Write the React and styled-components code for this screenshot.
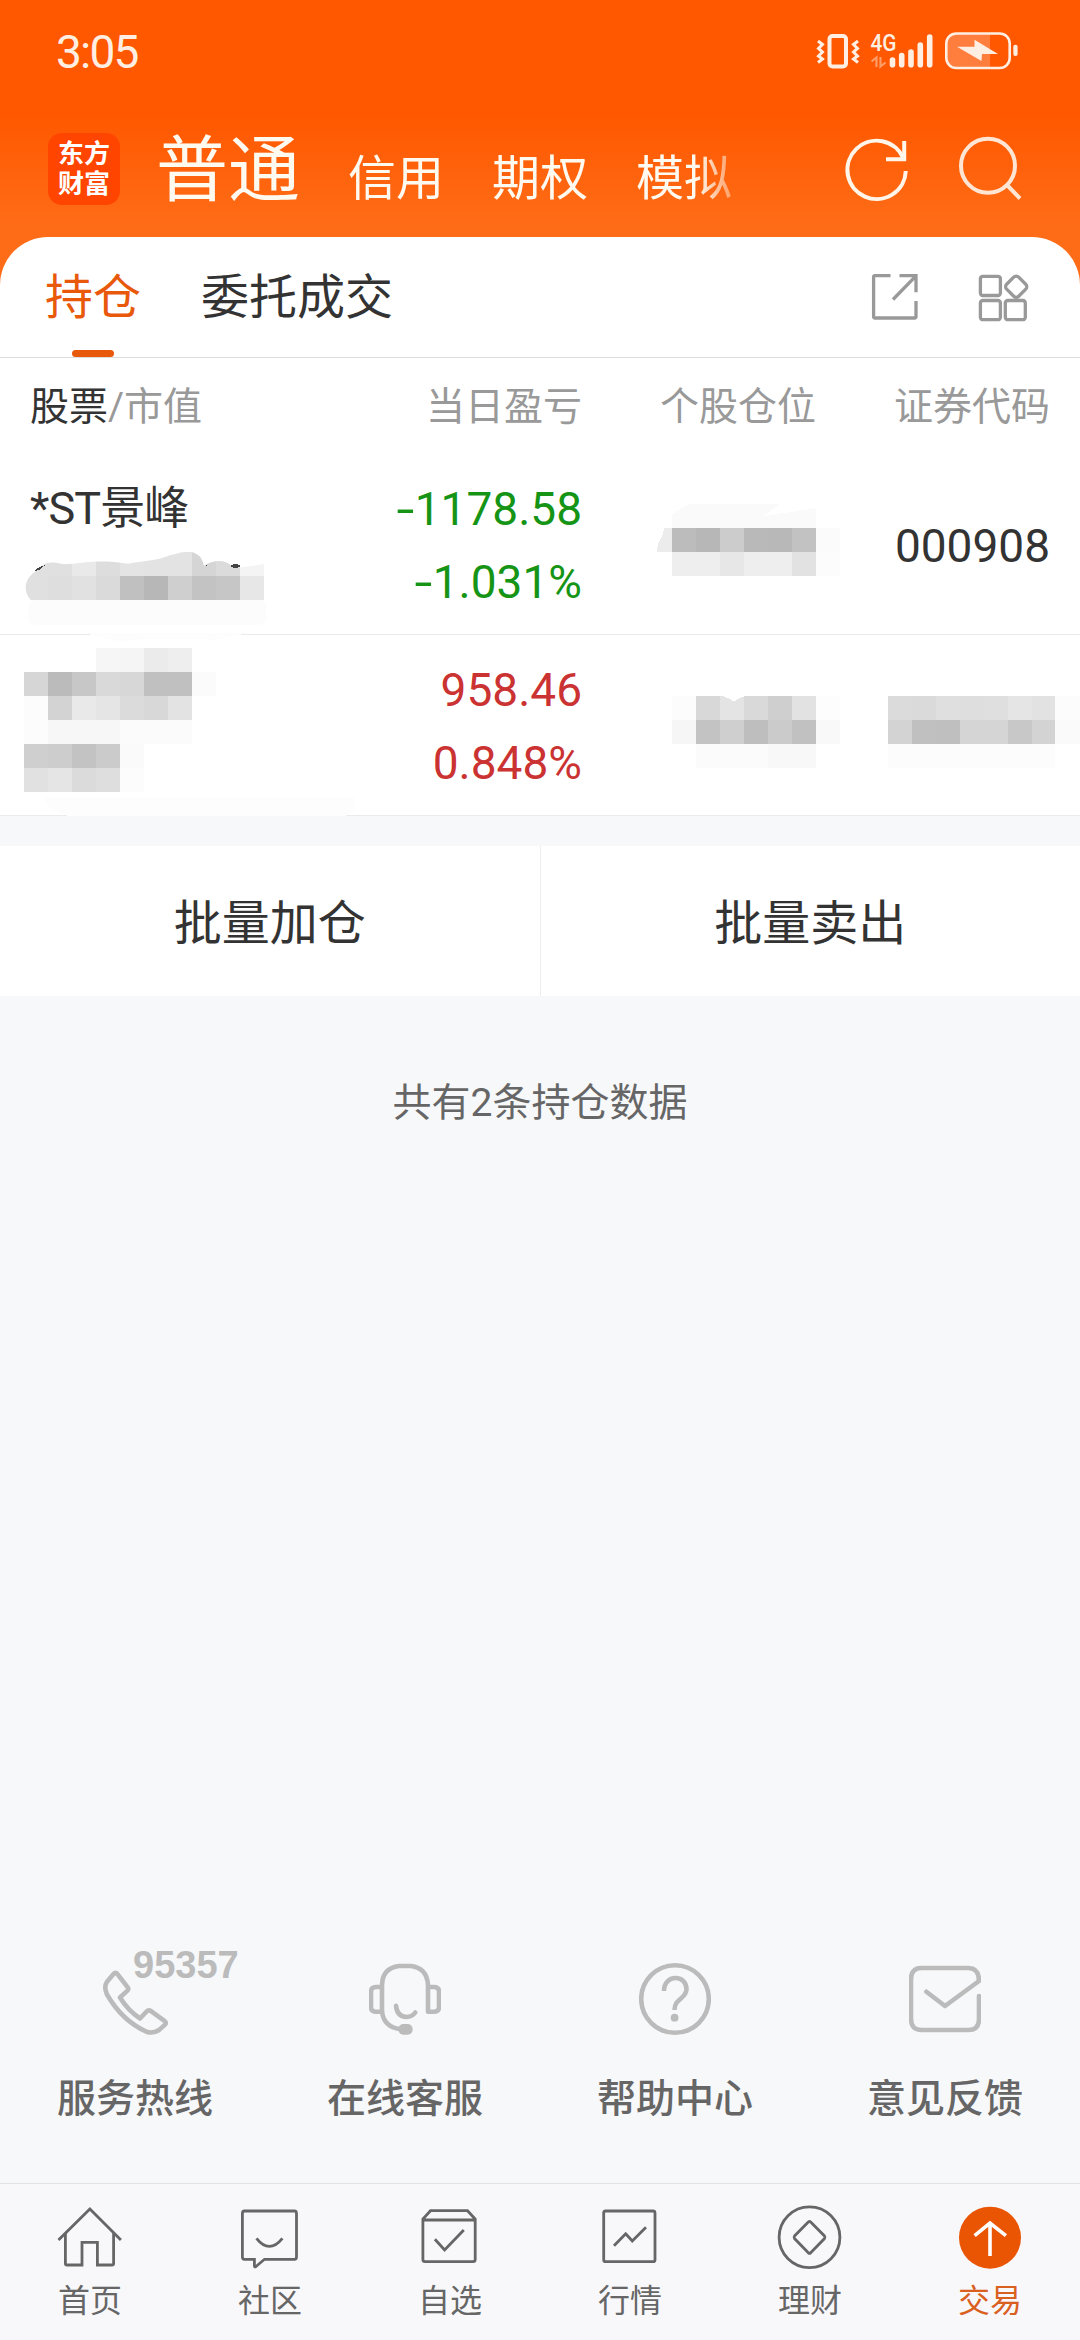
import { useState } from "react";
import styled, { createGlobalStyle } from "styled-components";

const tabs = ["普通", "信用", "期权", "模拟"];

// x, y, width, colour (three units to a pixel, 72 units high)
const amountCells = [
  [72, 336, 144, "#e0e0e0"],
  [216, 336, 72, "#e9e9e9"],
  [288, 336, 72, "#dddddd"],
  [360, 336, 72, "#e4e4e4"],
  [432, 336, 144, "#e3e3e3"],
  [576, 336, 72, "#d5d5d5"],
  [648, 336, 72, "#dbdbdb"],
  [720, 336, 72, "#f4f4f4"],
  [72, 408, 72, "#e0e0e0"],
  [144, 408, 72, "#dedede"],
  [216, 408, 72, "#e1e1e1"],
  [288, 408, 72, "#dadada"],
  [360, 408, 72, "#c0c0c0"],
  [432, 408, 72, "#b7b7b7"],
  [504, 408, 72, "#cfcfcf"],
  [576, 408, 72, "#c3c3c3"],
  [648, 408, 72, "#c6c6c6"],
  [720, 408, 72, "#e7e7e7"],
];

const nameCells = [
  [288, 624, 72, "#f6f6f6"],
  [360, 624, 72, "#f5f5f5"],
  [432, 624, 72, "#ebebeb"],
  [504, 624, 72, "#eeeeee"],
  [72, 696, 72, "#d6d6d6"],
  [144, 696, 72, "#bbbbbb"],
  [216, 696, 72, "#c7c7c7"],
  [288, 696, 72, "#d9d9d9"],
  [360, 696, 72, "#d7d7d7"],
  [432, 696, 144, "#c0c0c0"],
  [576, 696, 72, "#fbfbfb"],
  [72, 768, 72, "#fcfcfc"],
  [144, 768, 72, "#d3d3d3"],
  [216, 768, 72, "#e9e9e9"],
  [288, 768, 72, "#e5e5e5"],
  [360, 768, 72, "#dbdbdb"],
  [432, 768, 72, "#d8d8d8"],
  [504, 768, 72, "#e3e3e3"],
  [72, 840, 72, "#fcfcfc"],
  [144, 840, 216, "#f7f7f7"],
  [360, 840, 216, "#fbfbfb"],
  [72, 912, 72, "#cfcfcf"],
  [144, 912, 72, "#cdcdcd"],
  [216, 912, 72, "#c3c3c3"],
  [288, 912, 72, "#cbcbcb"],
  [360, 912, 72, "#fafafa"],
  [72, 984, 72, "#e1e1e1"],
  [144, 984, 72, "#e5e5e5"],
  [216, 984, 72, "#dbdbdb"],
  [288, 984, 72, "#dedede"],
  [360, 984, 72, "#fcfcfc"],
];

const ratioCells = [
  [96, 264, 72, "#bcbcbc"],
  [168, 264, 72, "#b7b7b7"],
  [240, 264, 72, "#cccccc"],
  [312, 264, 72, "#b9b9b9"],
  [384, 264, 72, "#b8b8b8"],
  [456, 264, 72, "#c2c2c2"],
  [528, 264, 72, "#fbfbfb"],
  [96, 336, 144, "#eeeeee"],
  [240, 336, 72, "#e7e7e7"],
  [312, 336, 144, "#eeeeee"],
  [456, 336, 72, "#e2e2e2"],
  [528, 336, 72, "#fcfcfc"],
];

const ratioCells2 = [
  [96, 768, 72, "#fcfcfc"],
  [168, 768, 72, "#d8d8d8"],
  [240, 768, 72, "#e4e4e4"],
  [312, 768, 72, "#d9d9d9"],
  [384, 768, 72, "#cfcfcf"],
  [456, 768, 72, "#e2e2e2"],
  [528, 768, 72, "#fdfdfd"],
  [96, 840, 72, "#f6f6f6"],
  [168, 840, 72, "#c3c3c3"],
  [240, 840, 72, "#cfcfcf"],
  [312, 840, 72, "#bebebe"],
  [384, 840, 72, "#cbcbcb"],
  [456, 840, 72, "#c1c1c1"],
  [528, 840, 72, "#f9f9f9"],
  [168, 912, 216, "#fbfbfb"],
  [384, 912, 144, "#f8f8f8"],
];

const codeCells = [
  [744, 768, 72, "#dbdbdb"],
  [816, 768, 72, "#dadada"],
  [888, 768, 72, "#dfdfdf"],
  [960, 768, 72, "#dedede"],
  [1032, 768, 72, "#dfdfdf"],
  [1104, 768, 72, "#e5e5e5"],
  [1176, 768, 68, "#e2e2e2"],
  [1244, 768, 76, "#fcfcfc"],
  [744, 840, 72, "#d3d3d3"],
  [816, 840, 72, "#c0c0c0"],
  [888, 840, 72, "#bfbfbf"],
  [960, 840, 144, "#d5d5d5"],
  [1104, 840, 72, "#c8c8c8"],
  [1176, 840, 68, "#d3d3d3"],
  [1244, 840, 76, "#fafafa"],
  [744, 912, 500, "#fcfcfc"],
];

const Cells = ({ data }) =>
  data.map(([x, y, w, fill]) => (
    <rect key={`${x}-${y}`} x={x} y={y} width={w} height="72" fill={fill} />
  ));

const services = [
  {
    name: "服务热线",
    phone: "95357",
    icon: (
      <path d="M14.3 12.3Q16.5 9.4 18.7 12.3L28.7 25.4Q30 27.3 28.2 28.9L21 35.5Q29 48.500 41 56.500L47.600 49.500Q49.600 47.400 52 49.200L65.800 59.200Q67.800 60.800 66 62.600L60.500 67.600Q54.500 72.300 47 69.500Q23 58.500 8 32.500Q4.500 25 8 19.800Z" />
    ),
  },
  {
    name: "在线客服",
    icon: (
      <>
        <path d="M13 50V23Q13.500 6 30 4H42Q58 6 59 23V49.700H65Q70 49.700 70 45V30Q70 25 65 25H59" />
        <path d="M13 25H7Q2 25 2 30V45Q2 49.700 7 49.700H13Q15 65 31 67" />
        <path d="M27 43.700Q28 54.500 37.500 55Q43 55 46.300 50.500" />
        <rect x="29.400" y="62" width="14.200" height="10.700" rx="5" fill="#bbb" stroke="none" />
      </>
    ),
  },
  {
    name: "帮助中心",
    icon: (
      <>
        <circle cx="36" cy="37" r="33.800" />
        <path
          d="M25 29C25 11.500 47.500 12.500 47.500 27C47.500 37 35.500 36 35.500 48"
          strokeLinecap="butt"
        />
        <circle cx="35.600" cy="55.700" r="3.900" fill="#bbb" stroke="none" />
      </>
    ),
  },
  {
    name: "意见反馈",
    icon: (
      <path d="M70 34V57Q70 68 59.500 68H12.500Q2 68 2 57V17Q2 6 12.500 6H59.500Q70 6 70 19L36 44L17.400 29.700" />
    ),
  },
];

const navs = [
  {
    name: "首页",
    icon: (
      <>
        <path d="M4.500 39L35.900 8L66.900 39" />
        <path d="M11.400 32V62.500Q11.400 64 13 64H28V41.300H43.400V64H58Q59.600 64 59.600 62.500V32" />
      </>
    ),
  },
  {
    name: "社区",
    icon: (
      <>
        <path d="M10.500 10H60.500Q62.500 10 62.500 12.500V56Q62.500 58.300 60.500 58.300H30.500L22 65.500Q20.500 66.500 20.400 65V58.300H10.500Q8.400 58.300 8.400 56V12.500Q8.400 10 10.500 10Z" />
        <path d="M22.500 37.300Q35.300 53.500 48.400 37.300" />
      </>
    ),
  },
  {
    name: "自选",
    icon: (
      <>
        <path d="M8.900 19V58.500Q8.900 60.700 11 60.700H59Q61.200 60.700 61.200 58.500V18L53.500 9.700H16.500L8.900 18ZM8.900 19H61.200" />
        <path d="M20.900 38.300L30.600 49L49.800 29" />
      </>
    ),
  },
  {
    name: "行情",
    icon: (
      <>
        <rect x="9.700" y="10" width="51.300" height="50.700" rx="2" />
        <path d="M20 44.700L31.700 32.700L38.300 40L52 26.300" />
      </>
    ),
  },
  {
    name: "理财",
    icon: (
      <>
        <circle cx="35.500" cy="36.300" r="30.400" />
        <path d="M34.300 21L20.500 35Q19.500 36.300 20.500 37.600L34.300 51.800Q35.500 52.800 36.700 51.800L50.500 37.600Q51.500 36.300 50.500 35L36.700 21Q35.500 20 34.300 21Z" />
      </>
    ),
  },
  {
    name: "交易",
    icon: (
      <>
        <circle cx="36" cy="36.700" r="31" fill="#ea5504" stroke="none" />
        <path d="M20.600 34.700L36 22L51.900 34.700M36 22V55" stroke="#fff" strokeWidth="3.600" strokeLinecap="butt" />
      </>
    ),
  },
];

const StatusIcons = () => (
  <svg width="206" height="44" viewBox="814 29 206 44" fill="none" stroke="#ffeee2">
    <rect x="829.500" y="36" width="16.500" height="30.500" rx="3" strokeWidth="4" />
    <path
      d="M818 41L822.500 44.500L818.500 48.500L822.500 52L818.500 56L822.500 59L818 62.500M858 41L853.500 44.500L857.500 48.500L853.500 52L857.500 56L853.500 59L858 62.500"
      strokeWidth="3"
    />
    <text
      x="870.500"
      y="50.500"
      textLength="26"
      lengthAdjust="spacingAndGlyphs"
      fontSize="23"
      fontWeight="500"
      fill="#ffeee2"
      stroke="none"
    >
      4G
    </text>
    <path d="M876.500 67V57.500L871.500 61.500M880.500 57V66.500L885.500 62.500" stroke="#ff9d68" strokeWidth="2.200" />
    <path
      d="M892.500 60V64.800M901.700 55.500V64.800M911 52V64.800M920.300 45V64.800M929.700 37V64.800"
      strokeWidth="5.600"
      strokeLinecap="round"
    />
    <path d="M990 34V67H956Q947 67 947 58V43Q947 34 956 34Z" fill="#ff7d3d" stroke="none" />
    <rect x="946.300" y="33.500" width="63.400" height="34.500" rx="10" strokeWidth="2.600" />
    <path d="M974.500 39.800L998 54H982L981.500 61L957 46.800H974.500Z" fill="#ffeee2" stroke="none" />
    <rect x="1013.300" y="44.700" width="4.300" height="11.300" rx="2" fill="#ffeee2" stroke="none" />
  </svg>
);

const App = () => {
  const [tab, setTab] = useState("普通");
  const [page, setPage] = useState("交易");

  return (
    <Page>
      <GlobalStyle />
      <Header>
        <StatusBar>
          <Time>3:05</Time>
          <StatusIcons />
        </StatusBar>
        <TopBar>
          <Logo>
            <span>东方</span>
            <span>财富</span>
          </Logo>
          <TabList>
            {tabs.map((t) => (
              <TopTab key={t} $active={t === tab} onClick={() => setTab(t)}>
                {t}
              </TopTab>
            ))}
          </TabList>
          <TopIcons>
            <svg width="72" height="72" viewBox="840 134 72 72" fill="none" stroke="#fff5e8" strokeWidth="4">
              <path d="M904.800 171A29.200 29.200 0 1 1 902.500 158.500" />
              <path d="M903.200 141V159.200H885" />
            </svg>
            <svg width="72" height="72" viewBox="953 134 72 72" fill="none" stroke="#ffe6d4" strokeWidth="4">
              <circle cx="987" cy="165.700" r="27" />
              <path d="M1005.500 184.500L1019 198.500" />
            </svg>
          </TopIcons>
        </TopBar>
      </Header>

      <Card>
        <SubTabs>
          <SubTab $active>持仓</SubTab>
          <SubTab>委托成交</SubTab>
          <SubIcons>
            <svg width="68" height="68" viewBox="0 0 68 68">
              <path d="M29.500 12.700H14Q12.600 12.700 12.600 14V53.500Q12.600 55 14 55H53.500Q55 55 55 53.500V38" />
              <path d="M38.500 12.700H55V29.300M54.500 13.300L32 36.500" />
            </svg>
            <svg width="68" height="68" viewBox="0 0 68 68">
              <rect x="11.400" y="13.300" width="20" height="19.200" rx="2.500" />
              <rect x="11.400" y="37.500" width="20" height="19.200" rx="2.500" />
              <rect x="36.300" y="37.500" width="20" height="19.200" rx="2.500" />
              <rect x="38.700" y="15.200" width="17" height="17" rx="3.500" transform="rotate(45 47.200 23.700)" />
            </svg>
          </SubIcons>
        </SubTabs>

        <TableHead>
          <span>
            <b>股票</b>/市值
          </span>
          <span>当日盈亏</span>
          <span>个股仓位</span>
          <span>证券代码</span>
        </TableHead>

        <Row>
          <Cell>
            <StockName>*ST景峰</StockName>
            <Mosaic width="290" height="73" viewBox="90 312 870 219">
              <clipPath id="amount">
                <path d="M92 480C70 455 70 420 105 395C130 366 150 362 190 373C250 370 290 356 385 371C440 362 470 362 510 346C550 334 560 334 575 336C600 345 605 352 612 377C640 360 672 358 692 375Q715 385 730 381L792 372V480Z" />
              </clipPath>
              <rect x="84" y="480" width="715" height="74" rx="20" fill="#fcfcfc" />
              <g clipPath="url(#amount)">
                <Cells data={amountCells} />
              </g>
              <path d="M104 394Q112 380 135 376L118 389ZM613 378L628 373L620 378Z" fill="#444" />
              <ellipse cx="707" cy="378" rx="15" ry="5" fill="#444" />
            </Mosaic>
          </Cell>
          <Cell $color="#169416" $right>
            <Line>
              <Minus>-</Minus>1178.58
            </Line>
            <Line>
              <Minus>-</Minus>1.031%
            </Line>
          </Cell>
          <Cell>
            <Mosaic width="234" height="180" viewBox="-174 42 702 540">
              <path d="M96 264V222L150 192H420L370 228L528 205V264Z" fill="#fafafa" />
              <path d="M52 336Q50 310 66 290L73 264H96V336Z" fill="#ececec" />
              <Cells data={ratioCells} />
            </Mosaic>
          </Cell>
          <Cell $right>
            <Line>000908</Line>
          </Cell>
        </Row>

        <Row>
          <Cell>
            <Mosaic width="290" height="180" viewBox="90 585 870 540">
              <path d="M255 580H740L650 600Q450 590 360 606Z" fill="#fdfdfd" />
              <path d="M205 1128Q140 1110 130 1070H1060Q1080 1110 1035 1128Z" fill="#fdfdfd" />
              <Cells data={nameCells} />
            </Mosaic>
          </Cell>
          <Cell $color="#cb3232" $right>
            <Line>958.46</Line>
            <Line>0.848%</Line>
          </Cell>
          <Cell>
            <Mosaic width="234" height="180" viewBox="-174 585 702 540">
              <Cells data={ratioCells2} />
              <path d="M240 766Q268 774 282 785Q295 774 322 766Z" fill="#fff" />
            </Mosaic>
          </Cell>
          <Cell>
            <Mosaic width="234" height="180" viewBox="528 585 702 540">
              <Cells data={codeCells} />
            </Mosaic>
          </Cell>
        </Row>
      </Card>

      <Actions>
        <ActionBtn>批量加仓</ActionBtn>
        <ActionBtn>批量卖出</ActionBtn>
      </Actions>

      <Total>共有2条持仓数据</Total>

      <Services>
        {services.map((s) => (
          <Service key={s.name}>
            <svg width="72" height="76" viewBox="0 0 72 76">
              {s.icon}
            </svg>
            {s.phone && <Hotline>{s.phone}</Hotline>}
            <span>{s.name}</span>
          </Service>
        ))}
      </Services>

      <NavBar>
        {navs.map((n) => (
          <NavItem key={n.name} $active={n.name === page} onClick={() => setPage(n.name)}>
            <svg width="72" height="72" viewBox="0 0 72 72">
              {n.icon}
            </svg>
            <span>{n.name}</span>
          </NavItem>
        ))}
      </NavBar>
    </Page>
  );
};
export default App;

const GlobalStyle = createGlobalStyle`
  * {
    box-sizing: border-box;
  }
  body {
    margin: 0;
    background: #f7f8fa;
    font-family: Roboto, "Noto Sans CJK SC", sans-serif;
  }
  button {
    padding: 0;
    border: none;
    background: none;
    color: inherit;
    font: inherit;
  }
  svg {
    flex: none;
    display: block;
  }
`;

const Page = styled.div`
  display: flex;
  flex-direction: column;
  width: 1080px;
  height: 2340px;
  overflow: hidden;
  background: #f7f8fa;
`;

const Header = styled.header`
  height: 285px;
  flex: none;
  background: linear-gradient(#ff5800 115px, #ff6c17 225px);
`;
const StatusBar = styled.div`
  display: flex;
  align-items: center;
  justify-content: space-between;
  height: 102px;
  padding: 0 60px 0 56px;
`;
const Time = styled.span`
  font-size: 46px;
  line-height: 102px;
  letter-spacing: -1.8px;
  color: #ffeee2;
  margin-top: 2px;
`;
const TopBar = styled.div`
  display: flex;
  height: 135px;
  padding: 0 54px 0 48px;
`;
const Logo = styled.div`
  display: flex;
  flex-direction: column;
  align-items: center;
  justify-content: center;
  width: 72px;
  height: 72px;
  margin-top: 31px;
  border-radius: 14px;
  background: #ff4500;
  color: #fff;
  font-size: 26px;
  font-weight: 700;
  line-height: 30px;
`;
const TabList = styled.nav`
  display: flex;
  align-items: baseline;
  gap: 48px;
  margin-left: 36px;
  color: #fffaf0;
  height: 135px;
  padding-right: 24px;
  mask-image: linear-gradient(to right, #000 540px, rgba(0, 0, 0, 0.35) 578px);
`;
const TopTab = styled.button`
  font-size: ${({ $active }) => ($active ? "72px" : "48px")};
  line-height: 138px;
`;
const TopIcons = styled.div`
  display: flex;
  gap: 41px;
  margin: 32px 0 0 auto;
`;

const Card = styled.main`
  flex: none;
  margin-top: -48px;
  border-radius: 48px 48px 0 0;
  background: #fff;
  color: #333;
`;
const SubTabs = styled.div`
  display: flex;
  align-items: center;
  gap: 60px;
  height: 121px;
  padding: 0 43px 0 45px;
  border-bottom: 1px solid #dcdcdc;
`;
const SubTab = styled.button`
  display: flex;
  flex-direction: column;
  align-items: center;
  height: 120px;
  font-size: 48px;
  line-height: 122px;
  color: ${({ $active }) => ($active ? "#e8590c" : "#333")};

  &::after {
    content: "";
    width: 42px;
    height: 7px;
    margin-top: -9px;
    border-radius: 4px;
    background: ${({ $active }) => ($active ? "#e8590c" : "transparent")};
  }
`;
const SubIcons = styled.div`
  display: flex;
  gap: 40px;
  margin-left: auto;

  svg {
    fill: none;
    stroke: #999;
    stroke-width: 3.3;
  }
`;

const Grid = styled.div`
  display: grid;
  grid-template-columns: 290px 262px 234px 234px;
  padding: 0 30px;
`;
const TableHead = styled(Grid)`
  height: 96px;
  font-size: 39px;
  line-height: 98px;
  color: #999;

  span + span {
    text-align: right;
  }
  b {
    font-weight: 400;
    color: #333;
  }
`;
const Row = styled(Grid)`
  height: 181px;
  border-bottom: 1px solid #ebebeb;
`;
const Cell = styled.div`
  display: flex;
  flex-direction: column;
  justify-content: center;
  color: ${({ $color }) => $color || "#333"};
  text-align: ${({ $right }) => ($right ? "right" : "left")};
`;
const Line = styled.div`
  height: 73px;
  font-size: 46px;
  line-height: 76px;
`;
const StockName = styled(Line)`
  font-size: 45px;
  letter-spacing: -0.9px;
`;
const Minus = styled.span`
  display: inline-block;
  margin-right: 3px;
  transform: scaleX(1.4);
`;
const Mosaic = styled.svg`
  overflow: visible;
  shape-rendering: crispEdges;
`;

const Actions = styled.div`
  display: flex;
  flex: none;
  height: 150px;
  margin-top: 30px;
  background: #fff;
`;
const ActionBtn = styled.button`
  flex: 1;
  padding-bottom: 5px;
  font-size: 48px;
  color: #333;

  & + & {
    border-left: 1px solid #eee;
  }
`;
const Total = styled.p`
  margin: 78px 0 0;
  font-size: 39px;
  line-height: 58px;
  text-align: center;
  color: #666;
`;

const Services = styled.div`
  display: flex;
  margin-top: auto;
  height: 221px;
`;
const Service = styled.div`
  position: relative;
  flex: 1;
  display: flex;
  flex-direction: column;
  align-items: center;
  font-size: 39px;
  font-weight: 500;
  line-height: 58px;
  color: #666;

  svg {
    margin-bottom: 32px;
    fill: none;
    stroke: #bbb;
    stroke-width: 4.6;
    stroke-linecap: round;
    stroke-linejoin: round;
  }
`;
const Hotline = styled.em`
  position: absolute;
  left: 133px;
  top: -16px;
  font: bold 38px/38px "Liberation Sans", sans-serif;
  color: #bbb;
`;

const NavBar = styled.nav`
  display: flex;
  flex: none;
  height: 157px;
  border-top: 1px solid #e2e2e4;
  background: #f8f8fb;
`;
const NavItem = styled.button`
  flex: 1;
  display: flex;
  flex-direction: column;
  align-items: center;
  padding-top: 17px;
  font-size: 32px;
  line-height: 48px;
  color: ${({ $active }) => ($active ? "#d9601f" : "#666")};

  svg {
    margin-bottom: 4px;
    fill: none;
    stroke: #666;
    stroke-width: 2.8;
  }
`;
